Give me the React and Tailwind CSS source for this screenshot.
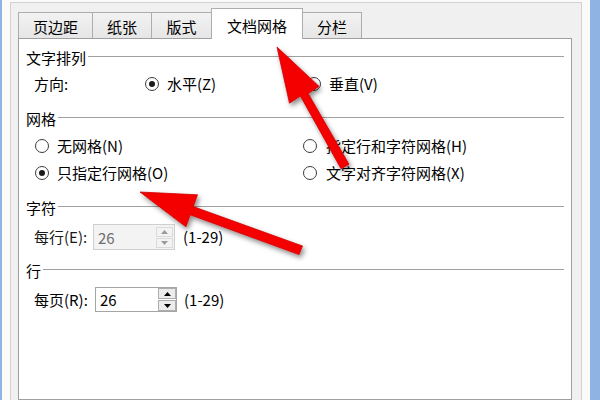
import React from 'react';

const font = { fontFamily: '"Noto Sans CJK SC", "Noto Sans", sans-serif' };

const Radio = ({ checked }) => (
  <span className="inline-flex h-[14px] w-[14px] shrink-0 items-center justify-center rounded-full border border-[#3c3c3c] bg-white">
    {checked && <span className="h-[6px] w-[6px] rounded-full bg-[#1a1a1a]" />}
  </span>
);

const Heading = ({ children, className }) => (
  <div className={`flex h-[20px] items-center pl-[7px] pr-[7px] ${className}`}>
    <span>{children}</span>
    <span className="mb-[4px] ml-[2px] h-px flex-1 bg-[#a0a0a0]" />
  </div>
);

const Arrow = ({ up, disabled }) => (
  <svg width="7" height="4" viewBox="0 0 7 4">
    <path
      d={up ? 'M0 4 L3.5 0 L7 4 Z' : 'M0 0 L3.5 4 L7 0 Z'}
      fill={disabled ? '#9a9a9a' : '#000'}
    />
  </svg>
);

const Spin = ({ disabled }) => (
  <div
    className={
      disabled
        ? 'flex h-[26px] w-[82px] items-center border border-[#cfcfcf] bg-[#f3f3f3] text-[#6d6d6d]'
        : 'flex h-[25px] w-[82px] items-center border border-[#a5a5a5] bg-white text-black'
    }
  >
    <span className="flex-1 pl-[4px] leading-none">26</span>
    {disabled ? (
      <div className="mr-[1px] flex flex-col gap-[1px]">
        <div className="flex h-[10px] w-[17px] items-center justify-center border border-[#dadada]">
          <Arrow up disabled />
        </div>
        <div className="flex h-[10px] w-[17px] items-center justify-center border border-[#dadada]">
          <Arrow disabled />
        </div>
      </div>
    ) : (
      <div className="flex flex-col gap-[1px]">
        <div className="flex h-[11px] w-[18px] items-center justify-center border border-[#adadad] bg-[#ececec]">
          <Arrow up />
        </div>
        <div className="flex h-[11px] w-[18px] items-center justify-center border border-[#adadad] bg-[#ececec]">
          <Arrow />
        </div>
      </div>
    )}
  </div>
);

const tabs = [
  { label: '页边距', w: 'w-[74px]' },
  { label: '纸张', w: 'w-[59px]' },
  { label: '版式', w: 'w-[60px]' },
];

export default function App() {
  return (
    <div className="relative flex h-[400px] w-[600px] overflow-hidden bg-[#fafafa] text-[15px] leading-[20px] text-black" style={font}>
      <div className="w-[2px] bg-[#8fb4e3]" />
      <div className="flex flex-1 pl-[8px] pt-[2px]">
        <div className="flex w-[572px] flex-col border-l border-r border-t border-[#d2d2d2] bg-[#f0f0f0] pl-[7px] pr-[9px] pt-[5px]">
          {/* tabs */}
          <div className="relative z-10 flex h-[30px] items-end">
            {tabs.map((t) => (
              <div
                key={t.label}
                className={`flex h-[26px] ${t.w} items-center justify-center border-l border-t border-[#adadad] bg-gradient-to-b from-[#f2f2f2] to-[#e6e6e6] pt-[2px]`}
              >
                {t.label}
              </div>
            ))}
            <div className="mb-[-1px] flex h-[31px] w-[92px] items-center justify-center border-l border-r border-t border-[#adadad] bg-white pt-[4px]">
              文档网格
            </div>
            <div className="flex h-[26px] w-[59px] items-center justify-center border-r border-t border-[#adadad] bg-gradient-to-b from-[#f2f2f2] to-[#e6e6e6] pt-[2px]">
              分栏
            </div>
          </div>

          {/* panel */}
          <div className="flex-1 border border-[#a0a0a0] bg-white">
            <Heading className="mt-[9px]">文字排列</Heading>
            <div className="mt-[6px] flex h-[20px] items-center pl-[15px]">
              <span className="w-[111px]">方向:</span>
              <div className="flex w-[162px] items-center gap-[8px]">
                <Radio checked />
                <span>水平(Z)</span>
              </div>
              <div className="flex items-center gap-[8px]">
                <Radio />
                <span>垂直(V)</span>
              </div>
            </div>

            <Heading className="mt-[15px]">网格</Heading>
            <div className="mt-[7px] flex h-[20px] items-center pl-[16px]">
              <div className="flex w-[268px] items-center gap-[8px]">
                <Radio />
                <span>无网格(N)</span>
              </div>
              <div className="flex items-center gap-[9px]">
                <Radio />
                <span>指定行和字符网格(H)</span>
              </div>
            </div>
            <div className="mt-[7px] flex h-[20px] items-center pl-[16px]">
              <div className="flex w-[268px] items-center gap-[8px]">
                <Radio checked />
                <span>只指定行网格(O)</span>
              </div>
              <div className="flex items-center gap-[9px]">
                <Radio />
                <span>文字对齐字符网格(X)</span>
              </div>
            </div>

            <Heading className="mt-[15px]">字符</Heading>
            <div className="mt-[6px] flex h-[26px] items-center pl-[15px]">
              <span className="w-[59px] text-[#1a1a1a]">每行(E):</span>
              <Spin disabled />
              <span className="ml-[8px]">(1-29)</span>
            </div>

            <Heading className="mt-[11px]">行</Heading>
            <div className="mt-[6px] flex h-[25px] items-center pl-[15px]">
              <span className="w-[61px]">每页(R):</span>
              <Spin />
              <span className="ml-[7px]">(1-29)</span>
            </div>
          </div>
        </div>
      </div>
      <div className="w-[8px]" />
      <div className="w-[10px] bg-[#8fb4e3]" />

      {/* red annotation arrows */}
      <svg className="pointer-events-none absolute left-0 top-0" width="600" height="400" viewBox="0 0 600 400">
        <defs>
          <filter id="sh" x="-20%" y="-20%" width="140%" height="140%">
            <feDropShadow dx="2" dy="3" stdDeviation="2.5" floodColor="#000" floodOpacity="0.45" />
          </filter>
        </defs>
        <g filter="url(#sh)" fill="#f40000" stroke="#d00000" strokeWidth="0.8" strokeLinejoin="round">
          <polygon points="277,47 319.1,86.4 308.2,93.6 349,164.3 341,168.7 300.4,96 289.5,103.2" />
          <polygon points="140,192 197.5,194.8 193.2,206.6 302.5,246 299,254.6 190.2,214.8 185.9,226.8" />
        </g>
      </svg>
    </div>
  );
}
